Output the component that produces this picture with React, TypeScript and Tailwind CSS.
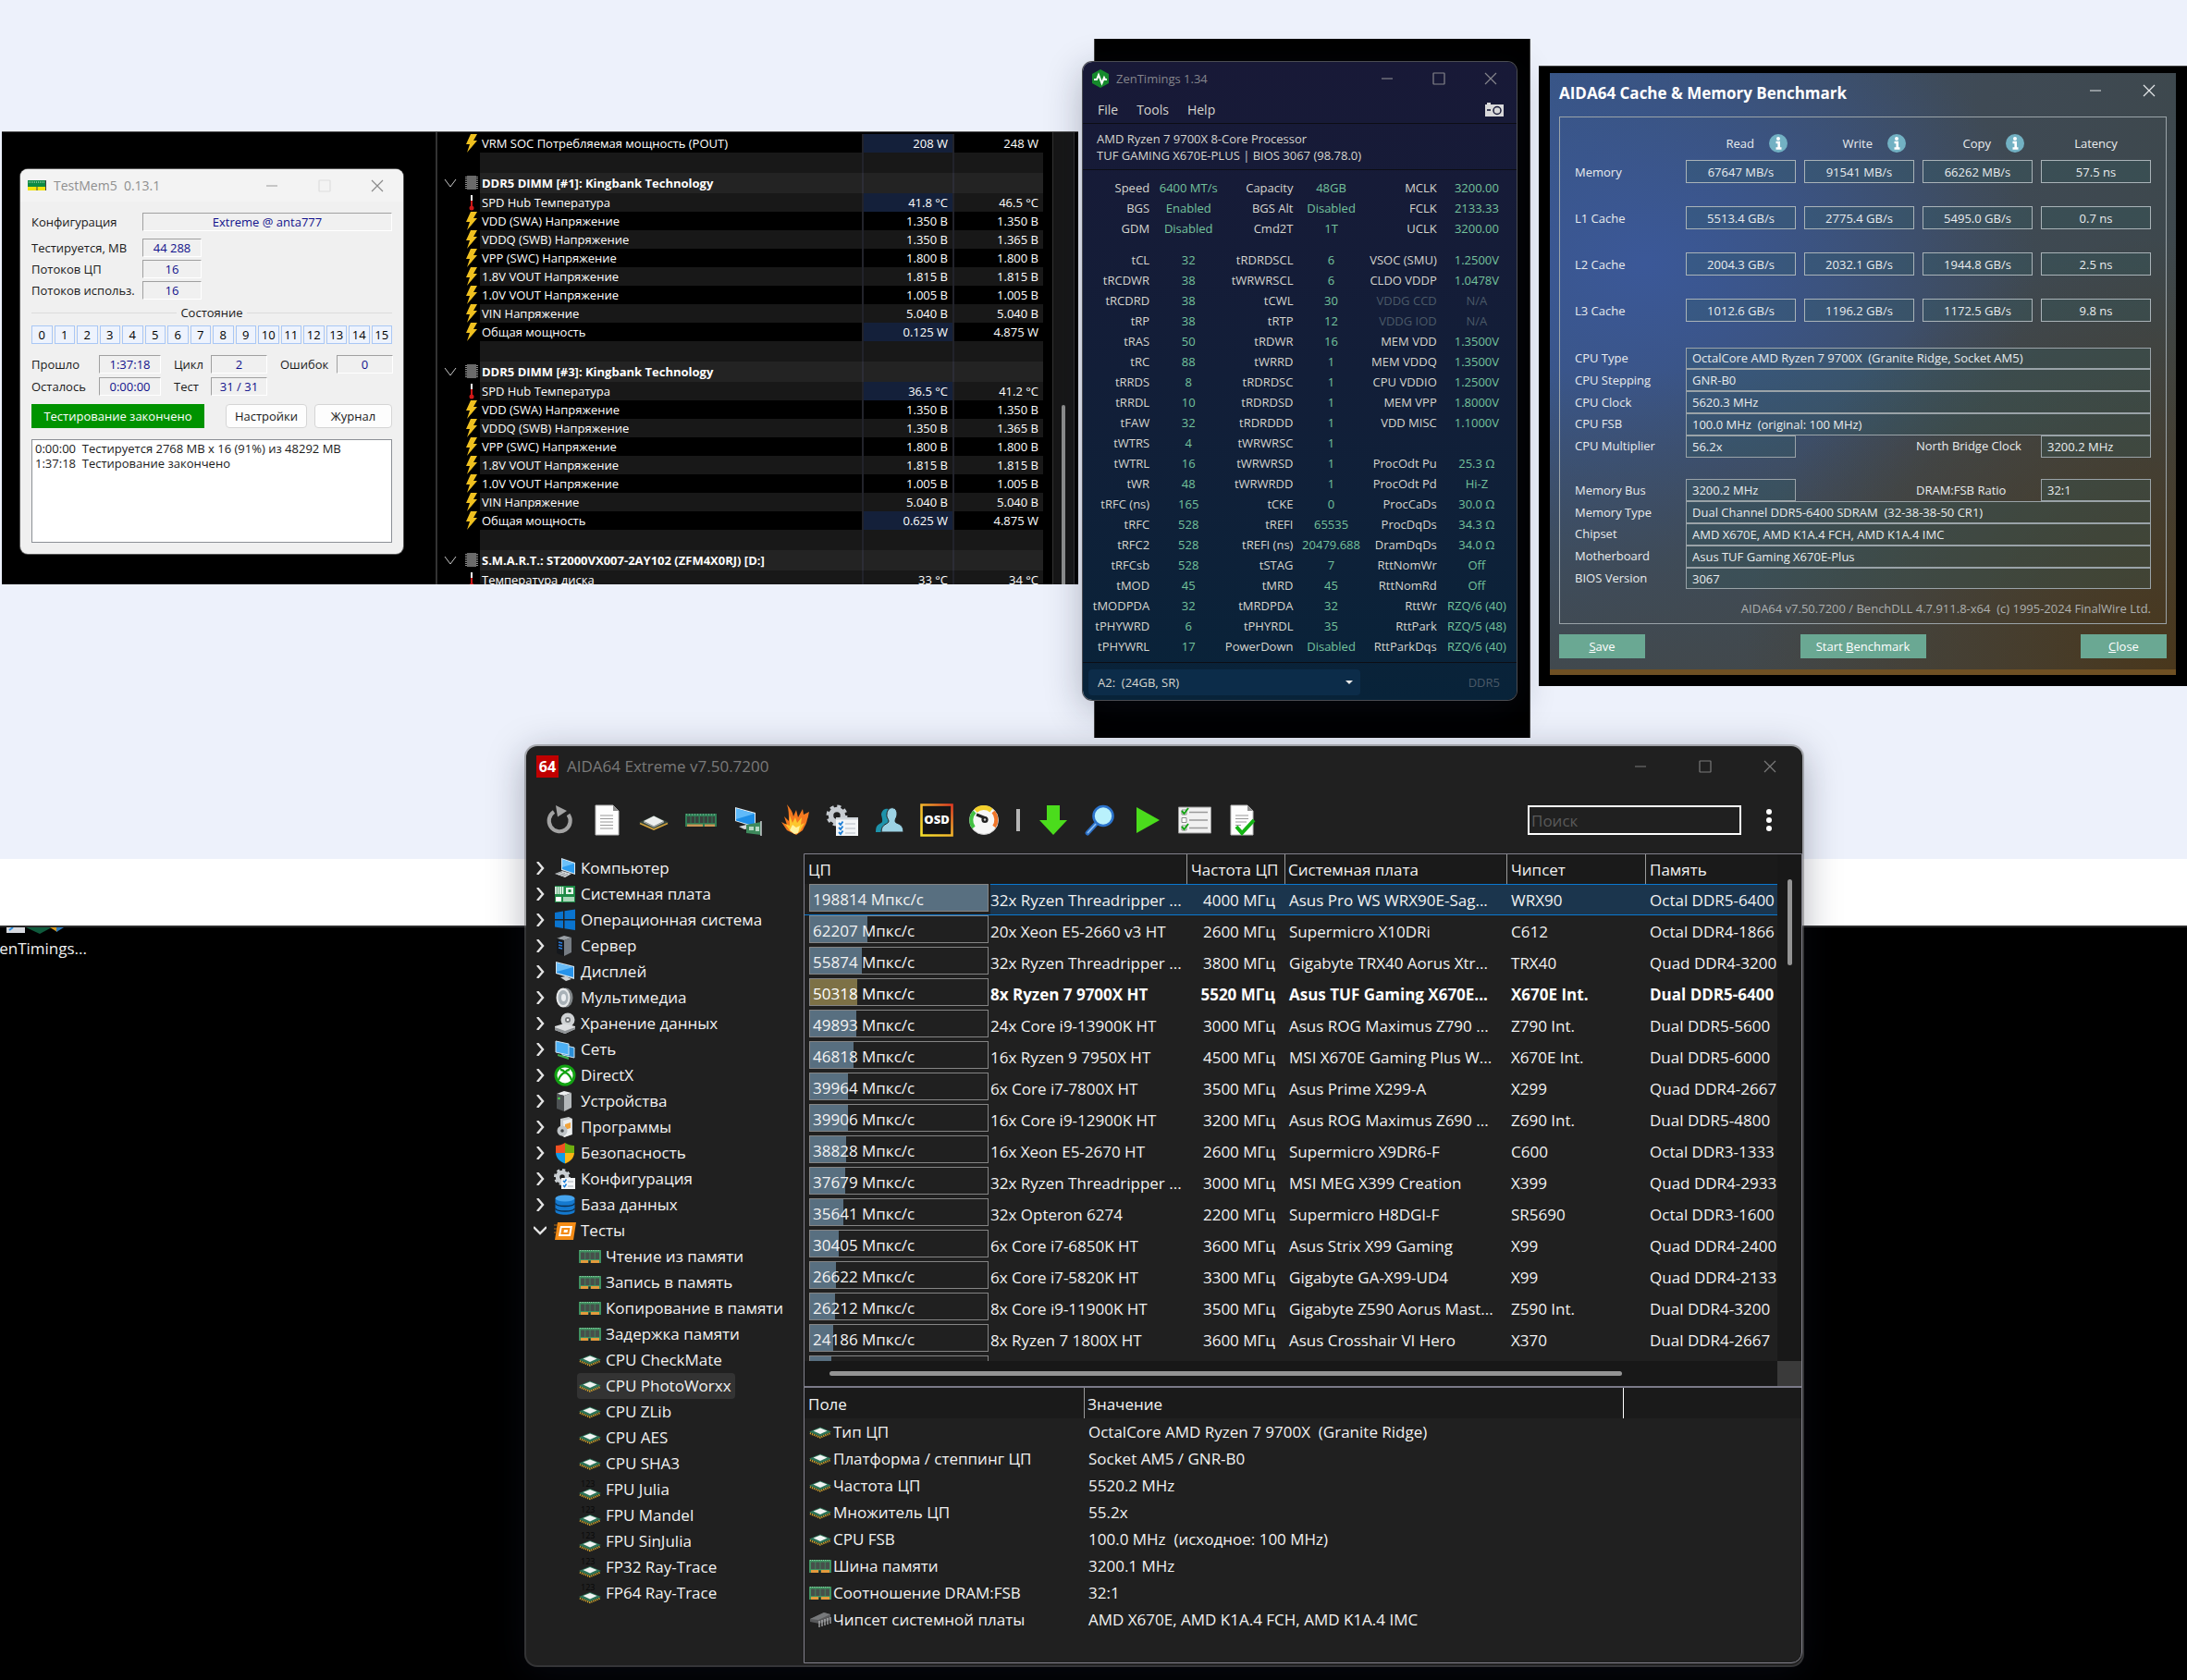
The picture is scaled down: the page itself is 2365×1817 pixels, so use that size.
import React from "react";

// ============================================================
// App.tsx
// Desktop with a memory tester, sensor list, timings window,
// cache benchmark and the main AIDA64 window.
// ============================================================

// ---------- Data ----------

const sensorGroups = [
  { n: 1, temp: ["41.8 °C", "46.5 °C"], power: ["0.125 W", "4.875 W"] },
  { n: 3, temp: ["36.5 °C", "41.2 °C"], power: ["0.625 W", "4.875 W"] },
];

const voltages = [
  ["VDD (SWA) Напряжение", "1.350 В", "1.350 В"],
  ["VDDQ (SWB) Напряжение", "1.350 В", "1.365 В"],
  ["VPP (SWC) Напряжение", "1.800 В", "1.800 В"],
  ["1.8V VOUT Напряжение", "1.815 В", "1.815 В"],
  ["1.0V VOUT Напряжение", "1.005 В", "1.005 В"],
  ["VIN Напряжение", "5.040 В", "5.040 В"],
];

const zenHead = [
  ["Speed", "6400 MT/s", "Capacity", "48GB", "MCLK", "3200.00"],
  ["BGS", "Enabled", "BGS Alt", "Disabled", "FCLK", "2133.33"],
  ["GDM", "Disabled", "Cmd2T", "1T", "UCLK", "3200.00"],
];

const zenRows = [
  ["tCL", "32", "tRDRDSCL", "6", "VSOC (SMU)", "1.2500V"],
  ["tRCDWR", "38", "tWRWRSCL", "6", "CLDO VDDP", "1.0478V"],
  ["tRCDRD", "38", "tCWL", "30", "VDDG CCD", "N/A"],
  ["tRP", "38", "tRTP", "12", "VDDG IOD", "N/A"],
  ["tRAS", "50", "tRDWR", "16", "MEM VDD", "1.3500V"],
  ["tRC", "88", "tWRRD", "1", "MEM VDDQ", "1.3500V"],
  ["tRRDS", "8", "tRDRDSC", "1", "CPU VDDIO", "1.2500V"],
  ["tRRDL", "10", "tRDRDSD", "1", "MEM VPP", "1.8000V"],
  ["tFAW", "32", "tRDRDDD", "1", "VDD MISC", "1.1000V"],
  ["tWTRS", "4", "tWRWRSC", "1", "", ""],
  ["tWTRL", "16", "tWRWRSD", "1", "ProcOdt Pu", "25.3 Ω"],
  ["tWR", "48", "tWRWRDD", "1", "ProcOdt Pd", "Hi-Z"],
  ["tRFC (ns)", "165", "tCKE", "0", "ProcCaDs", "30.0 Ω"],
  ["tRFC", "528", "tREFI", "65535", "ProcDqDs", "34.3 Ω"],
  ["tRFC2", "528", "tREFI (ns)", "20479.688", "DramDqDs", "34.0 Ω"],
  ["tRFCsb", "528", "tSTAG", "7", "RttNomWr", "Off"],
  ["tMOD", "45", "tMRD", "45", "RttNomRd", "Off"],
  ["tMODPDA", "32", "tMRDPDA", "32", "RttWr", "RZQ/6 (40)"],
  ["tPHYWRD", "6", "tPHYRDL", "35", "RttPark", "RZQ/5 (48)"],
  ["tPHYWRL", "17", "PowerDown", "Disabled", "RttParkDqs", "RZQ/6 (40)"],
];

const benchRows = [
  ["Memory", "67647 MB/s", "91541 MB/s", "66262 MB/s", "57.5 ns"],
  ["L1 Cache", "5513.4 GB/s", "2775.4 GB/s", "5495.0 GB/s", "0.7 ns"],
  ["L2 Cache", "2004.3 GB/s", "2032.1 GB/s", "1944.8 GB/s", "2.5 ns"],
  ["L3 Cache", "1012.6 GB/s", "1196.2 GB/s", "1172.5 GB/s", "9.8 ns"],
];

const cpuRows = [
  { score: 198814, cpu: "32x Ryzen Threadripper ...", clock: "4000 МГц", board: "Asus Pro WS WRX90E-Sag...", chipset: "WRX90", mem: "Octal DDR5-6400" },
  { score: 62207, cpu: "20x Xeon E5-2660 v3 HT", clock: "2600 МГц", board: "Supermicro X10DRi", chipset: "C612", mem: "Octal DDR4-1866" },
  { score: 55874, cpu: "32x Ryzen Threadripper ...", clock: "3800 МГц", board: "Gigabyte TRX40 Aorus Xtr...", chipset: "TRX40", mem: "Quad DDR4-3200" },
  { score: 50318, cpu: "8x Ryzen 7 9700X HT", clock: "5520 МГц", board: "Asus TUF Gaming X670E...", chipset: "X670E Int.", mem: "Dual DDR5-6400" },
  { score: 49893, cpu: "24x Core i9-13900K HT", clock: "3000 МГц", board: "Asus ROG Maximus Z790 ...", chipset: "Z790 Int.", mem: "Dual DDR5-5600" },
  { score: 46818, cpu: "16x Ryzen 9 7950X HT", clock: "4500 МГц", board: "MSI X670E Gaming Plus W...", chipset: "X670E Int.", mem: "Dual DDR5-6000" },
  { score: 39964, cpu: "6x Core i7-7800X HT", clock: "3500 МГц", board: "Asus Prime X299-A", chipset: "X299", mem: "Quad DDR4-2667" },
  { score: 39906, cpu: "16x Core i9-12900K HT", clock: "3200 МГц", board: "Asus ROG Maximus Z690 ...", chipset: "Z690 Int.", mem: "Dual DDR5-4800" },
  { score: 38828, cpu: "16x Xeon E5-2670 HT", clock: "2600 МГц", board: "Supermicro X9DR6-F", chipset: "C600", mem: "Octal DDR3-1333" },
  { score: 37679, cpu: "32x Ryzen Threadripper ...", clock: "3000 МГц", board: "MSI MEG X399 Creation", chipset: "X399", mem: "Quad DDR4-2933" },
  { score: 35641, cpu: "32x Opteron 6274", clock: "2200 МГц", board: "Supermicro H8DGI-F", chipset: "SR5690", mem: "Octal DDR3-1600" },
  { score: 30405, cpu: "6x Core i7-6850K HT", clock: "3600 МГц", board: "Asus Strix X99 Gaming", chipset: "X99", mem: "Quad DDR4-2400" },
  { score: 26622, cpu: "6x Core i7-5820K HT", clock: "3300 МГц", board: "Gigabyte GA-X99-UD4", chipset: "X99", mem: "Quad DDR4-2133" },
  { score: 26212, cpu: "8x Core i9-11900K HT", clock: "3500 МГц", board: "Gigabyte Z590 Aorus Mast...", chipset: "Z590 Int.", mem: "Dual DDR4-3200" },
  { score: 24186, cpu: "8x Ryzen 7 1800X HT", clock: "3600 МГц", board: "Asus Crosshair VI Hero", chipset: "X370", mem: "Dual DDR4-2667" },
];

const MAX_SCORE = 198814;

const fieldRows = [
  ["cpu", "Тип ЦП", "OctalCore AMD Ryzen 7 9700X  (Granite Ridge)"],
  ["cpu", "Платформа / степпинг ЦП", "Socket AM5 / GNR-B0"],
  ["cpu", "Частота ЦП", "5520.2 MHz"],
  ["cpu", "Множитель ЦП", "55.2x"],
  ["cpu", "CPU FSB", "100.0 MHz  (исходное: 100 MHz)"],
  ["ram", "Шина памяти", "3200.1 MHz"],
  ["ram", "Соотношение DRAM:FSB", "32:1"],
  ["chip", "Чипсет системной платы", "AMD X670E, AMD K1A.4 FCH, AMD K1A.4 IMC"],
];

// ---------- Small icons (24 x 24) ----------

const smallIcons: Record<string, React.ReactNode> = {
  computer: (
    <>
      <path d="M8 1l15 5v13L8 14z" fill="#d9e6ee" />
      <path d="M9 2.500l13 4.500v10.500L9 13z" fill="#2d9df0" />
      <path d="M9 2.500l13 4.500-13 4z" fill="#6cc1fa" />
      <path d="M1 18l8-3 10 3-7 4z" fill="#d5d8da" />
      <path d="M3 18.200l6-2M6 19.500l6-2M9 20.500l6-2" stroke="#8b9297" />
    </>
  ),
  board: (
    <>
      <path d="M1 3h22v18H1z" fill="#1d8a45" />
      <path d="M2 4v8M4.500 4v8M7 4v8M9.500 4v8" stroke="#fff" strokeWidth="1.600" />
      <path d="M13 5h8v7h-8zM15.500 7v3h3V7z" fill="#e8f5ec" fillRule="evenodd" />
      <path d="M2 15h6v5H2z" fill="#fff" />
      <path d="M10 15h12v5H10z" fill="#a9d7b9" />
    </>
  ),
  windows: (
    <path d="M1 4l9-1.500V11H1zM11.500 2.300L23 .5V11H11.500zM1 12.500h9V21l-9-1.500zM11.500 12.500H23V23l-11.500-1.800z" fill="#0a74cf" />
  ),
  server: (
    <>
      <path d="M3 4l8-3 8 2-8 3z" fill="#9aa0a6" />
      <path d="M3 4l8 2v17l-8-3z" fill="#15181c" />
      <path d="M11 6l8-3v16l-8 4z" fill="#767c83" />
      <path d="M5 8l4 1M5 11l4 1M5 14l4 1" stroke="#2b7de0" strokeWidth="1.300" />
    </>
  ),
  display: (
    <>
      <path d="M2 1l20 5v14L2 14z" fill="#d4e4ee" />
      <path d="M3 2.500l18 4.500v11L3 13z" fill="#2793ea" />
      <path d="M3 2.500l18 4.500L3 12z" fill="#69bdf8" />
      <path d="M7 18l6-1 6 3-6 2z" fill="#cfd3d6" />
    </>
  ),
  speaker: (
    <>
      <ellipse cx="13" cy="12" rx="7.500" ry="10.500" fill="#7f8487" />
      <ellipse cx="10" cy="12" rx="7.500" ry="10.500" fill="#e7e9ea" />
      <ellipse cx="10" cy="12" rx="5.500" ry="8" fill="#a9b2b8" />
      <ellipse cx="10.500" cy="12" rx="2.500" ry="4" fill="#eceff1" />
    </>
  ),
  disk: (
    <>
      <circle cx="15" cy="8" r="7.500" fill="#cfd2d4" />
      <circle cx="15" cy="8" r="3" fill="#76797c" />
      <circle cx="15" cy="8" r="1.300" fill="#fff" />
      <path d="M1 15l10-3 12 3v3l-11 5-11-4z" fill="#dcdee0" />
      <path d="M1 16l11 4 11-4v2l-11 5-11-4z" fill="#8f9396" />
    </>
  ),
  network: (
    <>
      <path d="M9 7l13 3v11l-13-3z" fill="#2b8fd8" stroke="#cfe3ef" />
      <path d="M2 3l14 3v12L2 15z" fill="#4cb0f5" stroke="#cfe3ef" />
      <path d="M4 17l12 3.500V23L4 19z" fill="#3cae4b" />
    </>
  ),
  directx: (
    <>
      <circle cx="12" cy="12" r="11.500" fill="#12a312" />
      <circle cx="12" cy="12" r="8.500" fill="#fff" />
      <path d="M7 6c2 0 4 1.500 5 2.700C13 7.500 15 6 17 6M5 17c1-3.500 4-7 7-8.300 3 1.300 6 4.800 7 8.300" fill="none" stroke="#12a312" strokeWidth="2.300" />
    </>
  ),
  device: (
    <>
      <path d="M3 4l8-3 8 2-8 3z" fill="#eceeef" />
      <path d="M3 4l8 2v17l-8-3z" fill="#4d5154" />
      <path d="M11 6l8-3v16l-8 4z" fill="#b4b8bb" />
      <circle cx="5.500" cy="9" r="1.200" fill="#4be04b" />
    </>
  ),
  programs: (
    <>
      <path d="M7 3l9-2 4 2v17l-9 3-4-3z" fill="#c8ccce" />
      <path d="M10 5l9-2v17l-8 3z" fill="#eceeef" />
      <path d="M12 9l6-2v6l-6 2z" fill="#f0a33c" />
      <circle cx="9" cy="16" r="5.500" fill="#bfc4c7" />
      <circle cx="9" cy="16" r="1.800" fill="#43474a" />
    </>
  ),
  shield: (
    <>
      <path d="M12 1v11H2V4c4 0 7-1 10-3z" fill="#f25022" />
      <path d="M12 1c3 2 6 3 10 3v8H12z" fill="#6fae10" />
      <path d="M2 12h10v11.500C6 21 2.500 17.500 2 12z" fill="#0f9be8" />
      <path d="M22 12H12v11.500c6-2.500 9.500-6 10-11.500z" fill="#fbb514" />
    </>
  ),
  config: (
    <>
      <circle cx="9" cy="10" r="5" fill="none" stroke="#c9ced2" strokeWidth="4.500" />
      <circle cx="9" cy="10" r="7.800" fill="none" stroke="#c9ced2" strokeWidth="2.400" strokeDasharray="3.200 2.900" />
      <path d="M8 11h15v12H8z" fill="#f4f6f8" />
      <path d="M10 14l1.500 1.500 2-3M10 19l1.500 1.500 2-3" fill="none" stroke="#1c7ed6" strokeWidth="1.500" />
      <path d="M15 15h6M15 20h6" stroke="#a7b0b8" />
    </>
  ),
  database: (
    <>
      <path d="M1.500 5v14c0 5 21 5 21 0V5z" fill="#1479cf" />
      <ellipse cx="12" cy="5" rx="10.500" ry="3.500" fill="#45a4ee" />
      <path d="M1.500 10.500c2 4 19 4 21 0M1.500 16c2 4 19 4 21 0" fill="none" stroke="#0b2c4a" strokeWidth="1.400" />
    </>
  ),
  tests: (
    <>
      <path d="M4 3h20l-3 19H1z" fill="#f38b16" />
      <path d="M7 7h13l-2 11H5zM8.500 9L7.300 16h9L17.500 9z" fill="#fff" fillRule="evenodd" />
      <path d="M11 11h4l-.5 3h-4z" fill="#fff" />
      <path d="M0 6h4M0 10h3M0 14h3" stroke="#b96a10" />
    </>
  ),
  ram: (
    <>
      <path d="M0 5h24v14H0z" fill="#3f9160" />
      <path d="M1 5.500h22" stroke="#8ed0a6" strokeDasharray="1 1" />
      <path d="M2 7.500h4.400v7.500H2zM7.200 7.500h4.400v7.500H7.200zM12.400 7.500h4.400v7.500h-4.400zM17.600 7.500H22v7.500h-4.400z" fill="#474f4b" />
      <path d="M2 16h8v3H2zM13 16h9v3h-9z" fill="#e39a3c" />
      <path d="M10.500 16.500h2V19h-2z" fill="#202020" />
    </>
  ),
  cpu: (
    <>
      <path d="M1 13L12 17.500 23 13" fill="none" stroke="#d9a92e" strokeWidth="2.400" strokeDasharray="1.200 1" />
      <path d="M0 11.500L12 6.500l12 5-12 5z" fill="#2c7458" />
      <path d="M4.500 10.500L12 7.500l7.500 3-7.500 3.500z" fill="#f1f3f2" />
    </>
  ),
  fpu: (
    <>
      <text x="2" y="9" fontSize="9" fill="#080808">123</text>
      <path d="M1 17.500L12 22 23 17.500" fill="none" stroke="#d9a92e" strokeWidth="2.400" strokeDasharray="1.200 1" />
      <path d="M0 16L12 11l12 5-12 5z" fill="#2c7458" />
      <path d="M4.500 15L12 12l7.500 3-7.500 3.500z" fill="#f1f3f2" />
    </>
  ),
  chip: (
    <>
      <path d="M1 11L16 4l7 2v6l-12 4-10-2z" fill="#58595b" />
      <path d="M1 11l15-7 7 2-13 6z" fill="#77797b" />
      <path d="M11 13v7M14 12v7M17 11v7M20 10v7M23 9v7" stroke="#b9bbbd" strokeWidth="1.200" />
    </>
  ),
};

const SmallIcon: React.FC<{ name: string }> = ({ name }) => (
  <svg viewBox="0 0 24 24" className="size-6 shrink-0" aria-hidden="true">
    {smallIcons[name]}
  </svg>
);

// ---------- Toolbar icons (36 x 36) ----------

const toolbarMain: [string, React.ReactNode][] = [
  ["Обновить", (
    <>
      <path d="M12 9A11.500 11.500 0 1 0 27.500 12" fill="none" stroke="#a3a3a3" strokeWidth="4.200" />
      <path d="M14 2l12 6-10 6.500z" fill="#a3a3a3" />
    </>
  )],
  ["Отчёт", (
    <>
      <path d="M6 2h19l6 6v26H6z" fill="#fdfdfd" stroke="#bbb" />
      <path d="M25 2l6 6h-6z" fill="#8d8d8d" />
      <path d="M11 13h14M11 16.500h14M11 20h14M11 23.500h14M11 27h14" stroke="#9a9a9a" strokeWidth="1.200" />
    </>
  )],
  ["Процессор", (
    <>
      <path d="M2 20.500L18 13l16 7.500-16 7.500z" fill="#35453c" />
      <path d="M3 21.500L18 28l15-6.500" fill="none" stroke="#cfa03c" strokeWidth="1.800" />
      <path d="M7 19l11-5.500L29 19l-11 5.500z" fill="#eceeed" />
      <path d="M7 19l11 5.500L29 19v1.500L18 26 7 20.500z" fill="#a7aaa8" />
    </>
  )],
  ["Память", (
    <>
      <path d="M1 11h34v14H1z" fill="#2f7d55" />
      <path d="M2 12h32" stroke="#8cc9a5" strokeDasharray="1 2" />
      <path d="M3 14h3.500v7H3zM7.500 14H11v7H7.500zM12 14h3.500v7H12zM17 14h3.500v7H17zM21.500 14H25v7h-3.500zM26 14h3.500v7H26zM30.500 14H33v7h-2.500z" fill="#3a413d" />
      <path d="M3 22.500h17V25H3zM22 22.500h11V25H22z" fill="#c99455" />
    </>
  )],
  ["Дисплей", (
    <>
      <path d="M4 4l22 6v16L4 19z" fill="#e3edf3" />
      <path d="M5 5.500L25 11v13.500L5 18.500z" fill="#1e8fe8" />
      <path d="M5 5.500L25 11 5 17z" fill="#5fbafa" />
      <path d="M8 25l8-2 4 4-6 1z" fill="#d5d8da" />
      <path d="M16 23l16-3v14l-16-2z" fill="#3e8a5c" />
      <path d="M19 25h5v4h-5zM26 25h4v5h-4z" fill="#b7d9c4" />
      <path d="M32 19v16" stroke="#c9cdd0" strokeWidth="1.500" />
    </>
  )],
  ["Стресс-тест", (
    <>
      <path d="M9 1c4 5 6 8 7 13l3-7 2 8 5-9 1 6 6-3c-1 4-1 6-2 8-1 5-2 6-5 12l-7 5-10-5-6-9 6 3-3-9 5 5c0-7 0-12-2-18z" fill="#f4791f" />
      <path d="M12 13l3 8 3-6 2 6 5-6-1 8 4-2-5 9-4 3-7-4-5-7 5 2z" fill="#fdc62f" />
      <path d="M15 23l4 3 4-2-2 8-4 1-5-4z" fill="#fff3a0" />
    </>
  )],
  ["Настройки", (
    <>
      <circle cx="12" cy="13" r="6.500" fill="none" stroke="#c6cbd0" strokeWidth="5.500" />
      <circle cx="12" cy="13" r="10" fill="none" stroke="#c6cbd0" strokeWidth="3" strokeDasharray="4.200 3.650" />
      <path d="M11 15h24v20H11z" fill="#f3f5f7" />
      <path d="M11 15h24v2.500H11z" fill="#cfd5da" />
      <path d="M14 21l2 2 2.500-3.500M14 26l2 2 2.500-3.500M14 31l2 2 2.500-3.500" fill="none" stroke="#1c7ed6" strokeWidth="1.800" />
      <path d="M21 22h11M21 27h11M21 32h11" stroke="#b4bcc4" strokeWidth="1.200" />
    </>
  )],
  ["Пользователи", (
    <>
      <path d="M9 12c1-9 12-8 11 1 0 3-2 4-2 7l2 2v9H3c0-7 2-8 6-10 2-1 1-5 0-9z" fill="#1d93ab" />
      <path d="M15 11c1-9 12-8 11 1 0 3-2 4-2 7 0 4 9 1 9 12H9c0-10 8-8 8-12 0-2-3-4-2-8z" fill="#9cd2e4" stroke="#202020" />
    </>
  )],
  ["OSD", (
    <>
      <path d="M1.500 1.500h33v33h-33z" fill="#161616" stroke="url(#osd)" strokeWidth="2.600" />
      <text x="18" y="22" fontSize="13" fontWeight="800" textAnchor="middle" fill="#fff">OSD</text>
      <defs>
        <linearGradient id="osd" x1="0" y1="1" x2="1" y2="0">
          <stop offset="0" stopColor="#f6e02c" />
          <stop offset="0.500" stopColor="#f3b62c" />
          <stop offset="1" stopColor="#e23b22" />
        </linearGradient>
      </defs>
    </>
  )],
  ["Датчики", (
    <>
      <circle cx="18" cy="18" r="15.500" fill="#f7f7f7" stroke="#c9c9c9" />
      <path d="M7 26a13 13 0 0 1 1-17" fill="none" stroke="#43c143" strokeWidth="4" />
      <path d="M9 8a13 13 0 0 1 17-.5" fill="none" stroke="#f3cf2a" strokeWidth="5" />
      <path d="M28 9a13 13 0 0 1 1 16" fill="none" stroke="#f0762a" strokeWidth="4" />
      <path d="M10 12l10 4" stroke="#222" strokeWidth="3" />
      <circle cx="19" cy="17.500" r="3.600" fill="#222" />
      <circle cx="19" cy="17.500" r="1.200" fill="#ccc" />
    </>
  )],
];

const toolbarActions: [string, React.ReactNode][] = [
  ["Загрузить", <path d="M11 2h14v16h8L18 34 3 18h8z" fill="#4bdc1c" />],
  ["Найти", (
    <>
      <path d="M4 32L15 20" stroke="#2c6fc4" strokeWidth="5" strokeLinecap="round" />
      <path d="M4.500 31.500L14 21" stroke="#8cc0f2" strokeWidth="1.800" strokeLinecap="round" />
      <circle cx="21" cy="13.500" r="10.500" fill="#b9f1fc" stroke="#2b73cc" strokeWidth="2.600" />
    </>
  )],
  ["Запуск", <path d="M6 4l25 14L6 32z" fill="#4bdc1c" />],
  ["Список", (
    <>
      <path d="M.5 4h35v28H.5z" fill="#f1f1f1" stroke="#9b9b9b" />
      <path d="M4 7h5v5H4zM4 15.500h5v5H4zM4 24h5v5H4z" fill="#fff" stroke="#8b8b8b" />
      <path d="M12 9.500h20M12 18h20M12 26.500h20" stroke="#9a9a9a" strokeWidth="1.600" />
      <path d="M4 8l2.500 3L11 5M4 25l2.500 3L11 22" fill="none" stroke="#16a516" strokeWidth="2" />
    </>
  )],
  ["Готово", (
    <>
      <path d="M6 2h18l6 6v26H6z" fill="#fdfdfd" stroke="#bbb" />
      <path d="M24 2l6 6h-6z" fill="#8d8d8d" />
      <path d="M11 13h14M11 16.500h14M11 20h12M11 23.500h6" stroke="#9a9a9a" strokeWidth="1.200" />
      <path d="M12 25l6 7L31 18" fill="none" stroke="#14b414" strokeWidth="4" />
    </>
  )],
];

const ToolButton: React.FC<{ label: string; children: React.ReactNode }> = ({ label, children }) => (
  <button type="button" aria-label={label} className="flex h-9 w-[51px] items-center justify-center">
    <svg viewBox="0 0 36 36" className="size-9" aria-hidden="true">
      {children}
    </svg>
  </button>
);

// Minimise / maximise / close glyphs share one 14px box
const WinGlyph: React.FC<{ kind: "min" | "max" | "close"; label: string; className: string }> = ({ kind, label, className }) => (
  <button type="button" aria-label={label} className={className}>
    <svg viewBox="0 0 14 14" className="size-3.5" fill="none" stroke="currentColor" strokeWidth="1.200" aria-hidden="true">
      {kind === "min" && <path d="M1 7h12" />}
      {kind === "max" && <rect x="1" y="1" width="12" height="12" rx="0.500" />}
      {kind === "close" && <path d="M1 1l12 12M13 1L1 13" />}
    </svg>
  </button>
);

// ---------- TestMem5 ----------

const MemField: React.FC<{ label: string; value: string; labelClass: string; boxClass: string }> = ({
  label,
  value,
  labelClass,
  boxClass,
}) => (
  <label className="flex items-center">
    <span className={labelClass}>{label}</span>
    <input
      readOnly
      value={value}
      className={`h-5 border border-t-[#a0a0a0] border-l-[#a0a0a0] border-r-white border-b-white bg-[#f0f0f0] text-center text-[#10108c] outline-none ${boxClass}`}
    />
  </label>
);

const TestMem: React.FC = () => (
  <section className="absolute left-[22px] top-[183px] flex w-[414px] flex-col overflow-hidden rounded-lg bg-[#f0f0f0] text-[13px] leading-4 text-[#1a1a1a] ring-1 ring-[#555] [font-family:'Open_Sans','Noto_Sans',sans-serif]">
    <header className="flex h-[35px] items-center bg-[#f3f3f3] pl-2 text-[#8f8f8f]">
      <svg viewBox="0 0 20 12" className="h-3 w-5" aria-hidden="true">
        <path d="M0 0h20v7H0z" fill="#0d8a43" />
        <path d="M1 2h18" stroke="#d7f0df" strokeDasharray="1 1" />
        <path d="M0 7h20v4H0z" fill="#f2e40c" />
        <path d="M10 7v4M19.500 0v11" stroke="#444" />
      </svg>
      <h2 className="ml-2 whitespace-pre text-sm">TestMem5  0.13.1</h2>
      <div className="ml-auto flex">
        <WinGlyph kind="min" label="Свернуть" className="flex w-[57px] justify-center text-[#9a9a9a]" />
        <WinGlyph kind="max" label="Развернуть" className="flex w-[57px] justify-center text-[#dedede]" />
        <WinGlyph kind="close" label="Закрыть" className="flex w-[57px] justify-center text-[#8a8a8a]" />
      </div>
    </header>

    <div className="flex flex-col px-3 pt-3 pb-3">
      <MemField label="Конфигурация" value="Extreme @ anta777" labelClass="w-[120px]" boxClass="w-0 flex-1" />
      <div className="mt-2 flex flex-col gap-[3px]">
        <MemField label="Тестируется, MB" value="44 288" labelClass="w-[120px]" boxClass="w-16" />
        <MemField label="Потоков ЦП" value="16" labelClass="w-[120px]" boxClass="w-16" />
        <MemField label="Потоков использ." value="16" labelClass="w-[120px]" boxClass="w-16" />
      </div>

      <div className="mt-1 flex h-5 items-center gap-1 before:h-px before:flex-1 before:bg-[#dcdcdc] after:h-px after:flex-1 after:bg-[#dcdcdc]">
        Состояние
      </div>

      <div className="mt-1 grid grid-cols-16 gap-0.5">
        {Array.from({ length: 16 }, (_, i) => (
          <span key={i} className="flex h-5 items-center justify-center border border-[#a9c7f5] bg-[#eef3fd] text-black">
            {i}
          </span>
        ))}
      </div>

      <div className="mt-3 grid grid-cols-[140px_101px_1fr] justify-between gap-x-3.5 gap-y-1">
        <MemField label="Прошло" value="1:37:18" labelClass="w-[73px]" boxClass="w-[67px]" />
        <MemField label="Цикл" value="2" labelClass="w-10" boxClass="w-[61px]" />
        <MemField label="Ошибок" value="0" labelClass="w-[61px]" boxClass="w-[61px]" />
        <MemField label="Осталось" value="0:00:00" labelClass="w-[73px]" boxClass="w-[67px]" />
        <MemField label="Тест" value="31 / 31" labelClass="w-10" boxClass="w-[61px]" />
      </div>

      <div className="mt-[9px] flex h-[26px]">
        <button type="button" className="w-[187px] bg-[#009300] text-white">Тестирование закончено</button>
        <button type="button" className="ml-auto w-[88px] rounded border border-[#d5d5d5] bg-[#fdfdfd]">Настройки</button>
        <button type="button" className="ml-2 w-[84px] rounded border border-[#d5d5d5] bg-[#fdfdfd]">Журнал</button>
      </div>

      <textarea
        readOnly
        aria-label="Журнал теста"
        value={"0:00:00  Тестируется 2768 MB x 16 (91%) из 48292 MB\n1:37:18  Тестирование закончено"}
        className="mt-3 h-28 resize-none overflow-hidden border border-[#8c9096] bg-white px-[3px] py-px outline-none"
      />
    </div>
  </section>
);

// ---------- Sensor list ----------

const Bolt = () => (
  <svg viewBox="0 0 14 20" className="mx-auto h-5 w-3.5" aria-hidden="true">
    <path d="M6 0h7L9 7h4L2 20l3-9H1z" fill="#efc01f" />
  </svg>
);

const Thermo = () => (
  <svg viewBox="0 0 14 20" className="mx-auto h-5 w-3.5" aria-hidden="true">
    <path d="M7 2v9" stroke="#f5f5f5" strokeWidth="2" />
    <path d="M7 8v8" stroke="#d01818" strokeWidth="2" />
    <circle cx="7" cy="16" r="2.500" fill="#d01818" />
  </svg>
);

const Dimm = () => (
  <svg viewBox="0 0 14 20" className="mx-auto h-5 w-3.5" aria-hidden="true">
    <path d="M1 3v14M13 3v14" stroke="#8d8d8d" strokeWidth="2" strokeDasharray="1 1" />
    <path d="M2 2h10v15H2z" fill="#6a6a6a" />
  </svg>
);

const SensorRow: React.FC<{ icon: React.ReactNode; cells: string[]; dark?: boolean; marked?: boolean }> = ({
  icon,
  cells,
  dark,
  marked,
}) => (
  <tr className={`h-5 ${dark ? "bg-black" : "bg-[#181818]"}`}>
    <td className="bg-black p-0" />
    <td className="bg-black p-0">{icon}</td>
    <td className="p-0 pl-0.5">{cells[0]}</td>
    <td className={`border-l-2 border-[#22232b] p-0 pr-[5px] text-right ${marked ? "bg-[#14203a]" : ""}`}>{cells[1]}</td>
    <td className="border-l-2 border-[#22232b] p-0 pr-[5px] text-right">{cells[2]}</td>
  </tr>
);

const SensorHead: React.FC<{ title: string }> = ({ title }) => (
  <tr className="h-[22px] bg-[#232323] font-bold">
    <td className="bg-black p-0">
      <svg viewBox="0 0 16 16" className="mx-auto size-4" fill="none" stroke="#c9c9c9" aria-hidden="true">
        <path d="M2 4l6 8 6-8" />
      </svg>
    </td>
    <td className="bg-black p-0"><Dimm /></td>
    <td className="p-0 pl-0.5">{title}</td>
    <td className="border-l-2 border-[#2c2d36] p-0" />
    <td className="border-l-2 border-[#2c2d36] p-0" />
  </tr>
);

const SensorGap = () => (
  <tr className="h-[22px] bg-[#181818]">
    <td className="bg-black p-0" colSpan={2} />
    <td className="p-0" />
    <td className="border-l-2 border-[#22232b] p-0" />
    <td className="border-l-2 border-[#22232b] p-0" />
  </tr>
);

const Sensors: React.FC = () => (
  <section className="absolute left-[2px] top-[142px] flex h-[490px] w-[1164px] overflow-hidden border-t border-[#555] bg-black text-white [font-family:'Open_Sans','Noto_Sans',sans-serif]">
    <div className="ml-[469px] border-l-2 border-[#333] pt-[2px]">
      <table className="w-[655px] table-fixed border-separate border-spacing-0 text-[13px] leading-[18px] whitespace-nowrap">
        <colgroup>
          <col className="w-[27px]" />
          <col className="w-[19px]" />
          <col />
          <col className="w-[98px]" />
          <col className="w-[98px]" />
        </colgroup>
        <tbody>
          <SensorRow dark marked icon={<Bolt />} cells={["VRM SOC Потребляемая мощность (POUT)", "208 W", "248 W"]} />
          <SensorGap />
          {sensorGroups.map((g) => (
            <React.Fragment key={g.n}>
              <SensorHead title={`DDR5 DIMM [#${g.n}]: Kingbank Technology`} />
              <SensorRow marked icon={<Thermo />} cells={["SPD Hub Температура", ...g.temp]} />
              {voltages.map((v, i) => (
                <SensorRow key={v[0]} dark={i % 2 === 0} icon={<Bolt />} cells={v} />
              ))}
              <SensorRow dark marked icon={<Bolt />} cells={["Общая мощность", ...g.power]} />
              <SensorGap />
            </React.Fragment>
          ))}
          <SensorHead title="S.M.A.R.T.: ST2000VX007-2AY102 (ZFM4X0RJ) [D:]" />
          <SensorRow icon={<Thermo />} cells={["Температура диска", "33 °C", "34 °C"]} />
        </tbody>
      </table>
    </div>
    {/* scrollbar */}
    <div className="ml-2.5 w-6 border-x border-[#333] bg-[#171717]">
      <div className="mx-auto mt-[295px] h-[200px] w-1 rounded bg-[#8f8f8f]" />
    </div>
  </section>
);

// ---------- ZenTimings ----------

const ZenTable: React.FC<{ rows: string[][]; className?: string }> = ({ rows, className }) => (
  <table className={`w-full table-fixed border-collapse text-center ${className ?? ""}`}>
    <colgroup>
      <col className="w-[72px]" />
      <col className="w-[84px]" />
      <col className="w-[71px]" />
      <col className="w-[82px]" />
      <col className="w-[73px]" />
      <col className="w-[86px]" />
    </colgroup>
    <tbody>
      {rows.map((row) => (
        <tr key={row[0]} className="h-[22px]">
          {row.map((cell, i) => {
            const muted = i > 3 && row[5] === "N/A";
            const color = muted ? "text-[#4b5a68]" : i % 2 ? "text-[#74c39d]" : "text-[#d6d6cf]";
            return (
              <td key={i} className={`p-0 ${color}`}>
                <div className={i % 2 ? "flex justify-center" : "flex justify-end"}>{cell}</div>
              </td>
            );
          })}
        </tr>
      ))}
    </tbody>
  </table>
);

const ZenTimings: React.FC = () => (
  <section className="absolute left-[1171px] top-[67px] flex w-[469px] flex-col rounded-[10px] bg-linear-to-b from-[#181937] to-[#082339] text-[13px] leading-[18px] whitespace-nowrap text-[#d6d6cf] shadow-[0_0_0_1px_#4a4c52,0_10px_40px_rgba(20,25,50,0.3)] [font-family:'Open_Sans','Noto_Sans',sans-serif]">
    <header className="flex h-[37px] items-center pb-0.5 pl-[9px] text-[#85858c]">
      <svg viewBox="0 0 20 20" className="size-5" aria-hidden="true">
        <path d="M10 0l9 5v10l-9 5-9-5V5z" fill="#168a2c" />
        <path d="M3 11h3l2-5 3.500 9L14 9l1 2h2" fill="none" stroke="#fff" strokeWidth="2" />
      </svg>
      <h2 className="ml-[7px]">ZenTimings 1.34</h2>
      <div className="ml-auto flex">
        <WinGlyph kind="min" label="Minimize" className="flex w-14 justify-center" />
        <WinGlyph kind="max" label="Maximize" className="flex w-14 justify-center" />
        <WinGlyph kind="close" label="Close" className="flex w-14 justify-center" />
      </div>
    </header>

    <nav className="flex h-[30px] items-center gap-5 border-b border-[#0c0d14] px-4 text-sm">
      <button type="button">File</button>
      <button type="button">Tools</button>
      <button type="button">Help</button>
      <button type="button" aria-label="Screenshot" className="-mr-0.5 ml-auto">
        <svg viewBox="0 0 20 16" className="h-4 w-5" aria-hidden="true">
          <path d="M0 2h2V0h4v2h14v13H0z" fill="#d9d9da" />
          <circle cx="13" cy="8.500" r="4" fill="none" stroke="#181937" strokeWidth="1.500" />
          <path d="M2 8h4" stroke="#181937" strokeWidth="1.600" />
        </svg>
      </button>
    </nav>

    <div className="h-[50px] border-b border-[#0c0d14] px-[15px] pt-[7px]">
      <p>AMD Ryzen 7 9700X 8-Core Processor</p>
      <p>TUF GAMING X670E-PLUS | BIOS 3067 (98.78.0)</p>
    </div>

    <div className="pt-2 pb-1.5">
      <ZenTable rows={zenHead} />
      <ZenTable rows={zenRows} className="mt-3" />
    </div>

    <footer className="flex h-[41px] items-center border-t border-[#0c0d14] pt-0.5 pr-[18px] pl-1.5">
      <label className="relative flex">
        <span className="sr-only">Memory module</span>
        <select className="h-7 w-[294px] appearance-none rounded bg-[#0c2c49] px-2.5 outline-none">
          <option>A2:&nbsp; (24GB, SR)</option>
        </select>
        <svg viewBox="0 0 8 4" className="absolute top-3 right-2 h-1 w-2" aria-hidden="true">
          <path d="M0 0h8L4 4z" fill="#e8e8e8" />
        </svg>
      </label>
      <span className="ml-auto text-[#4b5a68]">DDR5</span>
    </footer>
  </section>
);

// ---------- Cache & Memory Benchmark ----------

const InfoDot = () => (
  <svg viewBox="0 0 20 20" className="size-5" aria-hidden="true">
    <circle cx="10" cy="10" r="10" fill="#72b1c3" />
    <circle cx="10" cy="5" r="2" fill="#fff" />
    <path d="M7.500 9h3.200v6M7.500 15.500h6" fill="none" stroke="#fff" strokeWidth="2.600" />
  </svg>
);

const WideRow: React.FC<{ label: string; value: string }> = ({ label, value }) => (
  <label className="flex min-h-0 flex-1 items-center">
    <span className="w-[120px]">{label}</span>
    <input readOnly value={value} className="-mb-px h-full w-0 flex-1 border border-[#9aa3a8] bg-[#30605f]/25 px-1.5 outline-none" />
  </label>
);

const SplitRow: React.FC<{ label: string; value: string; label2: string; value2: string }> = ({ label, value, label2, value2 }) => (
  <div className="flex min-h-0 flex-1">
    <label className="flex items-center">
      <span className="w-[120px]">{label}</span>
      <input readOnly value={value} className="-mb-px h-full w-[119px] border border-[#9aa3a8] bg-[#30605f]/25 px-1.5 outline-none" />
    </label>
    <label className="ml-auto flex items-center">
      <span className="w-[135px]">{label2}</span>
      <input readOnly value={value2} className="-mb-px h-full w-[119px] border border-[#9aa3a8] bg-[#30605f]/25 px-1.5 outline-none" />
    </label>
  </div>
);

const CacheBench: React.FC = () => (
  <div className="absolute top-[71px] right-0 left-[1664px] border-t border-[#444] bg-black pt-[7px] pr-3 pb-3 pl-3">
    <section className="flex flex-col border-b-6 border-[#6f5023] bg-[radial-gradient(circle_at_100%_100%,#49371c_0%,rgba(73,55,28,0)_50%),linear-gradient(to_bottom,rgba(66,72,74,0)_50%,rgba(66,72,74,0.9)_100%),radial-gradient(ellipse_at_15%_32%,#3b5898_0%,rgba(59,88,152,0)_52%),linear-gradient(100deg,#37547f_0%,#3f4a55_60%,#3d474a_100%)] px-2.5 text-[13px] leading-[18px] text-[#e9ecee] [font-family:'Open_Sans','Noto_Sans',sans-serif]">
      <header className="flex h-[47px] items-center pb-1">
        <h2 className="text-[17px] font-bold text-white">AIDA64 Cache &amp; Memory Benchmark</h2>
        <div className="-mr-2.5 ml-auto flex pb-1.5">
          <WinGlyph kind="min" label="Minimize" className="flex w-[58px] justify-center text-[#c9ced2]" />
          <WinGlyph kind="close" label="Close" className="flex w-[58px] justify-center text-[#e6e8ea]" />
        </div>
      </header>

      <div className="flex h-[549px] flex-col border border-[#9aa3a8] px-4">
        <div className="mt-[18px] ml-[120px] grid h-5 grid-cols-4 items-center gap-[9px]">
          {["Read", "Write", "Copy"].map((name) => (
            <div key={name} className="flex items-center justify-end gap-4 pr-[9px]">
              {name}
              <InfoDot />
            </div>
          ))}
          <div className="text-center">Latency</div>
        </div>
        <div className="mt-2 grid gap-[25px]">
          {benchRows.map(([name, ...values]) => (
            <div key={name} className="flex items-center">
              <span className="w-[120px]">{name}</span>
              <div className="grid flex-1 grid-cols-4 gap-[9px]">
                {values.map((v, i) => (
                  <input
                    key={i}
                    readOnly
                    aria-label={name}
                    value={v}
                    className="h-[25px] w-full border border-[#a9b3b8] bg-[#30605f]/25 text-center outline-none"
                  />
                ))}
              </div>
            </div>
          ))}
        </div>

        <div className="mt-[27px] flex h-[262px] shrink-0 flex-col">
          <WideRow label="CPU Type" value="OctalCore AMD Ryzen 7 9700X  (Granite Ridge, Socket AM5)" />
          <WideRow label="CPU Stepping" value="GNR-B0" />
          <WideRow label="CPU Clock" value="5620.3 MHz" />
          <WideRow label="CPU FSB" value="100.0 MHz  (original: 100 MHz)" />
          <SplitRow label="CPU Multiplier" value="56.2x" label2="North Bridge Clock" value2="3200.2 MHz" />
          <div className="flex-1" />
          <SplitRow label="Memory Bus" value="3200.2 MHz" label2="DRAM:FSB Ratio" value2="32:1" />
          <WideRow label="Memory Type" value="Dual Channel DDR5-6400 SDRAM  (32-38-38-50 CR1)" />
          <WideRow label="Chipset" value="AMD X670E, AMD K1A.4 FCH, AMD K1A.4 IMC" />
          <WideRow label="Motherboard" value="Asus TUF Gaming X670E-Plus" />
          <WideRow label="BIOS Version" value="3067" />
        </div>
        <p className="mt-3 text-right whitespace-pre text-[#aeb1b1]">
          {"AIDA64 v7.50.7200 / BenchDLL 4.7.911.8-x64  (c) 1995-2024 FinalWire Ltd."}
        </p>
      </div>

      <div className="flex justify-between pt-[11px] pb-3">
        <button type="button" className="h-[26px] w-[93px] bg-[#6aa893] text-white"><u>S</u>ave</button>
        <button type="button" className="h-[26px] w-[136px] bg-[#6aa893] text-white">Start <u>B</u>enchmark</button>
        <button type="button" className="h-[26px] w-[93px] bg-[#6aa893] text-white"><u>C</u>lose</button>
      </div>
    </section>
  </div>
);

// ---------- AIDA64 Extreme ----------

const treeTop: [string, string][] = [
  ["computer", "Компьютер"],
  ["board", "Системная плата"],
  ["windows", "Операционная система"],
  ["server", "Сервер"],
  ["display", "Дисплей"],
  ["speaker", "Мультимедиа"],
  ["disk", "Хранение данных"],
  ["network", "Сеть"],
  ["directx", "DirectX"],
  ["device", "Устройства"],
  ["programs", "Программы"],
  ["shield", "Безопасность"],
  ["config", "Конфигурация"],
  ["database", "База данных"],
  ["tests", "Тесты"],
];

const treeTests: [string, string][] = [
  ["ram", "Чтение из памяти"],
  ["ram", "Запись в память"],
  ["ram", "Копирование в памяти"],
  ["ram", "Задержка памяти"],
  ["cpu", "CPU CheckMate"],
  ["cpu", "CPU PhotoWorxx"],
  ["cpu", "CPU ZLib"],
  ["cpu", "CPU AES"],
  ["cpu", "CPU SHA3"],
  ["fpu", "FPU Julia"],
  ["fpu", "FPU Mandel"],
  ["fpu", "FPU SinJulia"],
  ["fpu", "FP32 Ray-Trace"],
  ["fpu", "FP64 Ray-Trace"],
];

const Tree: React.FC = () => (
  <aside className="w-[300px] shrink-0 pt-0.5">
    <ul>
      {treeTop.map(([icon, label]) => (
        <li key={label}>
          <button type="button" className="flex h-7 items-center pl-2">
            <svg viewBox="0 0 14 14" className="size-3.5" fill="none" stroke="#e4e4e4" strokeWidth="2.400" aria-hidden="true">
              {icon === "tests" ? <path d="M0 3l7 7 7-7" /> : <path d="M4 0l6 7-6 7" />}
            </svg>
            <span className="ml-2"><SmallIcon name={icon} /></span>
            <span className="ml-[5px]">{label}</span>
          </button>
        </li>
      ))}
      {treeTests.map(([icon, label]) => (
        <li key={label} className="pl-[55px]">
          <button
            type="button"
            className={`flex h-7 items-center gap-[5px] rounded-sm pr-1 pl-0.5 ${label === "CPU PhotoWorxx" ? "bg-[#333333]" : ""}`}
          >
            <SmallIcon name={icon} />
            {label}
          </button>
        </li>
      ))}
    </ul>
  </aside>
);

const ScoreBar: React.FC<{ score?: number; own?: boolean }> = ({ score, own }) => (
  <div className="relative h-[30px] w-[194px] border border-[#858585] bg-[#202020]">
    <div
      className={`absolute inset-y-0 left-0 max-w-full ${own ? "bg-[#7d7146]" : "bg-[#586f80]"}`}
      style={{ width: `calc(${((score ?? 21500) / MAX_SCORE) * 100}% + 2px)` }}
    />
    {score !== undefined && <span className="absolute top-1 left-[3px]">{score} Мпкс/с</span>}
  </div>
);

const ScoreTable: React.FC = () => (
  <div className="flex h-[548px]">
    <div className="min-w-0 flex-1 overflow-hidden">
      <table className="w-full table-fixed border-separate border-spacing-0 whitespace-nowrap">
        <colgroup>
          <col className="w-[201px]" />
          <col className="w-[212px]" />
          <col className="w-[106px]" />
          <col className="w-[240px]" />
          <col className="w-[150px]" />
          <col />
        </colgroup>
        <thead>
          <tr className="h-8 bg-[#1a1a1a] text-left">
            <th colSpan={2} className="p-0 pt-0.5 pl-1 font-normal">ЦП</th>
            <th className="border-l border-[#9a9a9a] p-0 pt-0.5 pl-1 font-normal">Частота ЦП</th>
            <th className="border-l border-[#9a9a9a] p-0 pt-0.5 pl-[3px] font-normal">Системная плата</th>
            <th className="border-l border-[#9a9a9a] p-0 pt-0.5 pl-1 font-normal">Чипсет</th>
            <th className="border-l border-[#9a9a9a] p-0 pt-0.5 pl-1 font-normal">Память</th>
          </tr>
        </thead>
        <tbody>
          {cpuRows.map((row, i) => {
            const cell = i === 0 ? "h-[34px] p-0 pt-0.5 border-y border-[#0a78d0]" : "h-[34px] p-0 pt-0.5";
            return (
              <tr key={row.score} className={i === 0 ? "bg-[#1b354d]" : i === 3 ? "font-bold text-white" : ""}>
                <td className={`h-[34px] p-0 pl-[5px] align-top ${i === 0 ? "border-b border-[#0a78d0] bg-[#202020]" : ""}`}>
                  <div className="font-normal"><ScoreBar score={row.score} own={i === 3} /></div>
                </td>
                <td className={cell}>{row.cpu}</td>
                <td className={`${cell} pr-2.5! text-right`}>{row.clock}</td>
                <td className={`${cell} pl-[5px]!`}>{row.board}</td>
                <td className={`${cell} pl-[5px]!`}>{row.chipset}</td>
                <td className={`${cell} overflow-hidden pl-[5px]!`}>{row.mem}</td>
              </tr>
            );
          })}
          <tr>
            <td className="h-[34px] p-0 pl-[5px] align-top"><ScoreBar /></td>
          </tr>
        </tbody>
      </table>
    </div>
    {/* vertical scrollbar */}
    <div className="w-[26px] bg-[#181818]">
      <div className="mx-auto mt-[27px] h-[93px] w-[5px] rounded-full bg-[#949494]" />
    </div>
  </div>
);

const FieldTable: React.FC = () => (
  <table className="w-full table-fixed border-separate border-spacing-0 whitespace-pre">
    <colgroup>
      <col className="w-[302px]" />
      <col className="w-[583px]" />
      <col />
    </colgroup>
    <thead>
      <tr className="h-[33px] bg-[#1a1a1a] text-left">
        <th className="p-0 pt-0.5 pl-1 font-normal">Поле</th>
        <th className="border-l border-[#9a9a9a] p-0 pt-0.5 pl-[3px] font-normal">Значение</th>
        <th className="border-l border-white p-0" />
      </tr>
    </thead>
    <tbody>
      {fieldRows.map(([icon, name, value]) => (
        <tr key={name} className="h-[29px]">
          <td className="p-0 pl-[5px]">
            <div className="flex items-center gap-0.5"><SmallIcon name={icon} />{name}</div>
          </td>
          <td className="p-0 pl-[5px]">{value}</td>
        </tr>
      ))}
    </tbody>
  </table>
);

const AidaWindow: React.FC = () => (
  <section className="absolute top-[807px] left-[569px] flex h-[994px] w-[1380px] flex-col overflow-hidden rounded-xl bg-[#202020] text-[17px] leading-6 text-[#f2f2f2] shadow-[0_0_0_2px_rgba(106,106,106,0.48),0_8px_40px_rgba(20,25,50,0.35)] [font-family:'Open_Sans','Noto_Sans',sans-serif]">
    <header className="flex h-11 shrink-0 items-center pl-[11px] text-[#7a7a7a]">
      <span className="flex size-6 items-center justify-center bg-[#c00000] text-base font-bold text-white">64</span>
      <h1 className="ml-[9px]">AIDA64 Extreme v7.50.7200</h1>
      <div className="ml-auto flex">
        <WinGlyph kind="min" label="Свернуть" className="flex w-[70px] justify-center" />
        <WinGlyph kind="max" label="Развернуть" className="flex w-[70px] justify-center" />
        <WinGlyph kind="close" label="Закрыть" className="flex w-[70px] justify-center" />
      </div>
    </header>

    <div className="flex h-[72px] shrink-0 items-center pl-2.5">
      {toolbarMain.map(([label, icon]) => (
        <ToolButton key={label} label={label}>{icon}</ToolButton>
      ))}
      <span className="flex w-6 justify-center"><i className="h-6 w-1 bg-[#b5b5b5]" /></span>
      {toolbarActions.map(([label, icon]) => (
        <ToolButton key={label} label={label}>{icon}</ToolButton>
      ))}
      <input
        type="search"
        aria-label="Поиск"
        placeholder="Поиск"
        className="ml-auto h-8 w-[231px] border-2 border-white bg-[#202020] px-0.5 outline-none placeholder:text-[#5a5a5a]"
      />
      <button type="button" aria-label="Меню" className="mr-[33px] ml-[27px] flex flex-col gap-[3px]">
        <i className="size-1.5 rounded-full bg-white" />
        <i className="size-1.5 rounded-full bg-white" />
        <i className="size-1.5 rounded-full bg-white" />
      </button>
    </div>

    <div className="flex min-h-0 flex-1 pb-0.5">
      <Tree />
      <div className="min-w-0 flex-1 rounded-br-xl border border-[#82818c]">
        <ScoreTable />
        {/* horizontal scrollbar */}
        <div className="flex h-[27px] items-center bg-[#181818]">
          <div className="ml-[27px] h-[5px] w-[857px] rounded-full bg-[#949494]" />
          <div className="ml-auto h-full w-[26px] bg-[#3a3a3a]" />
        </div>
        <div className="border-t-2 border-[#7b7a89]">
          <FieldTable />
        </div>
      </div>
    </div>
  </section>
);

// ---------- Desktop ----------

const App: React.FC = () => (
  <main className="relative flex min-h-screen w-full flex-col overflow-hidden">
    <div className="h-[929px] bg-[#edf1fb]" />
    <div className="h-[72px] bg-white" />
    <div className="flex-1 border-t-2 border-[#2b2b2b] bg-black text-[#f0f0f0] [font-family:'Open_Sans','Noto_Sans',sans-serif]">
      <svg viewBox="0 0 70 7" className="h-[7px] w-[70px]" aria-hidden="true">
        <path d="M7 0h20v6H7z" fill="#d7dae0" />
        <path d="M10 3l4-3" stroke="#2b8fe0" strokeWidth="2" />
        <path d="M28 0h28L43 7z" fill="#0f5a3c" />
        <path d="M54 0h8v5z" fill="#d79a1d" />
        <path d="M61 0h8l-8 5z" fill="#2b78b8" />
      </svg>
      <div className="flex w-[94px] justify-end overflow-hidden pt-1 text-[17px] leading-6">ZenTimings...</div>
    </div>

    <Sensors />
    <TestMem />
    <div className="absolute top-[42px] left-[1183px] h-[756px] w-[472px] border-x border-[#444] bg-black" />
    <ZenTimings />
    <CacheBench />
    <AidaWindow />
  </main>
);

export default App;
